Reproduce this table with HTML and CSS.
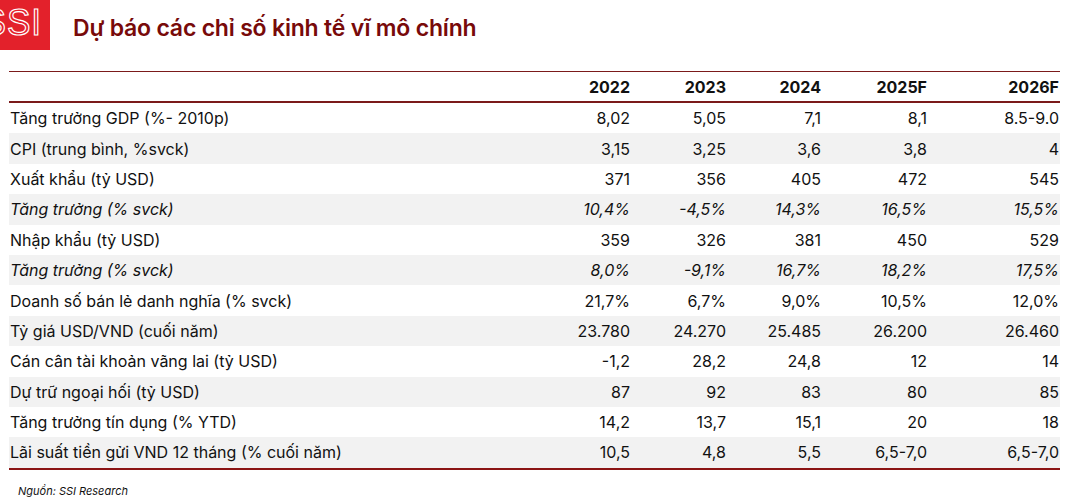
FILE: index.html
```html
<!DOCTYPE html>
<html lang="vi">
<head>
<meta charset="utf-8">
<link rel="stylesheet" href="styles.css">
</head>
<body>
<header class="head">
  <div class="logo"><span class="logo-text">SSI</span></div>
  <h1 class="title">Dự báo các chỉ số kinh tế vĩ mô chính</h1>
</header>
<table class="macro">
  <thead>
    <tr><th class="label"></th><th>2022</th><th>2023</th><th>2024</th><th>2025F</th><th>2026F</th></tr>
  </thead>
  <tbody>
    <tr><td class="label">Tăng trưởng GDP (%- 2010p)</td><td>8,02</td><td>5,05</td><td>7,1</td><td>8,1</td><td>8.5-9.0</td></tr>
    <tr class="alt"><td class="label">CPI (trung bình, %svck)</td><td>3,15</td><td>3,25</td><td>3,6</td><td>3,8</td><td>4</td></tr>
    <tr><td class="label">Xuất khẩu (tỷ USD)</td><td>371</td><td>356</td><td>405</td><td>472</td><td>545</td></tr>
    <tr class="alt it"><td class="label">Tăng trưởng (% svck)</td><td>10,4%</td><td>-4,5%</td><td>14,3%</td><td>16,5%</td><td>15,5%</td></tr>
    <tr><td class="label">Nhập khẩu (tỷ USD)</td><td>359</td><td>326</td><td>381</td><td>450</td><td>529</td></tr>
    <tr class="alt it"><td class="label">Tăng trưởng (% svck)</td><td>8,0%</td><td>-9,1%</td><td>16,7%</td><td>18,2%</td><td>17,5%</td></tr>
    <tr><td class="label">Doanh số bán lẻ danh nghĩa (% svck)</td><td>21,7%</td><td>6,7%</td><td>9,0%</td><td>10,5%</td><td>12,0%</td></tr>
    <tr class="alt"><td class="label">Tỷ giá USD/VND (cuối năm)</td><td>23.780</td><td>24.270</td><td>25.485</td><td>26.200</td><td>26.460</td></tr>
    <tr><td class="label">Cán cân tài khoản vãng lai (tỷ USD)</td><td>-1,2</td><td>28,2</td><td>24,8</td><td>12</td><td>14</td></tr>
    <tr class="alt"><td class="label">Dự trữ ngoại hối (tỷ USD)</td><td>87</td><td>92</td><td>83</td><td>80</td><td>85</td></tr>
    <tr><td class="label">Tăng trưởng tín dụng (% YTD)</td><td>14,2</td><td>13,7</td><td>15,1</td><td>20</td><td>18</td></tr>
    <tr class="alt last"><td class="label">Lãi suất tiền gửi VND 12 tháng (% cuối năm)</td><td>10,5</td><td>4,8</td><td>5,5</td><td>6,5-7,0</td><td>6,5-7,0</td></tr>
  </tbody>
</table>
<p class="source">Nguồn: SSI Research</p>
</body>
</html>
```
FILE: styles.css
```css
html, body { margin: 0; padding: 0; background: #fff; }
body { font-family: Inter, "Noto Sans", sans-serif; color: #111; width: 1084px; height: 498px; overflow: hidden; }
.head { display: flex; align-items: flex-start; height: 71px; }
.logo { width: 50px; height: 50px; background: #e3212b; display: flex; align-items: center; justify-content: flex-end; overflow: hidden; }
.logo-text { font-family: "Liberation Sans", Arial, sans-serif; font-size: 37px; line-height: 1; color: transparent; -webkit-text-stroke: 1.2px #fff; letter-spacing: 1px; margin-right: 6px; margin-top: -6px; transform: scaleX(0.95); }
.title { margin: 14px 0 0 23px; font-size: 23px; font-weight: 600; color: #780a0a; letter-spacing: -0.2px; line-height: 28px; }
.macro { margin-left: 9px; width: 1049px; border-collapse: collapse; border-top: 1px solid #7b1a1a; border-bottom: 2px solid #8b1414; table-layout: fixed; }
.macro th, .macro td { text-align: right; font-size: 16px; padding: 0; height: 30.4px; line-height: 20px; white-space: nowrap; }
.macro th { font-weight: 700; height: 29px; }
.macro thead tr { border-bottom: 2px solid #7b1a1a; }
.macro .label { text-align: left; width: 521px; padding-left: 1px; }
.macro th:nth-child(2), .macro td:nth-child(2) { width: 99px; }
.macro th:nth-child(3), .macro td:nth-child(3) { width: 96px; }
.macro th:nth-child(4), .macro td:nth-child(4) { width: 95px; }
.macro th:nth-child(5), .macro td:nth-child(5) { width: 106px; }
.macro th:nth-child(6), .macro td:nth-child(6) { width: 132px; padding-right: 1px; }
.macro tr.alt { background: #f2f2f2; }
.macro tr.it td { font-style: italic; }
.source { margin: 14px 0 0 18px; font-size: 11px; font-style: italic; color: #111; }
```
